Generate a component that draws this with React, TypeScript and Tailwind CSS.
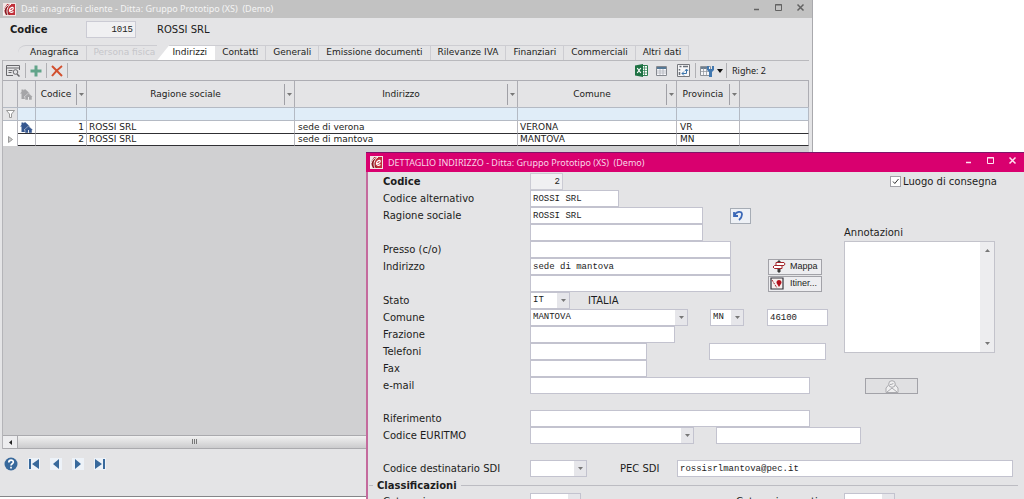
import { useState } from "react";
import type { ReactNode } from "react";
import clsx from "clsx";

const verdana = "font-['DejaVu_Sans',Verdana,sans-serif]";
const segoe = "font-['Noto_Sans','Segoe_UI',sans-serif]";
const arial = "font-['Liberation_Sans',Arial,sans-serif]";
const mono = "font-['Liberation_Mono','Courier_New',monospace]";

const tabs = [
  { name: "Anagrafica", style: "pl-3 pr-2 border-r" },
  { name: "Persona fisica", style: "pl-1.5 pr-0.5", disabled: true },
  { name: "Indirizzi", style: "pl-[15px] pr-2" },
  { name: "Contatti", style: "px-[7px] border-r" },
  { name: "Generali", style: "px-[7px] border-r" },
  { name: "Emissione documenti", style: "px-[7px] border-r" },
  { name: "Rilevanze IVA", style: "px-[7px] border-r" },
  { name: "Finanziari", style: "px-[7px] border-r" },
  { name: "Commerciali", style: "px-[7px] border-r" },
  { name: "Altri dati", style: "px-[7px] border-r" },
];

const columns = ["Codice", "Ragione sociale", "Indirizzo", "Comune", "Provincia"];

const addresses = [
  { codice: 1, ragione: "ROSSI SRL", indirizzo: "sede di verona", comune: "VERONA", provincia: "VR", main: true },
  { codice: 2, ragione: "ROSSI SRL", indirizzo: "sede di mantova", comune: "MANTOVA", provincia: "MN", main: false },
];

const Logo = () => (
  <svg viewBox="0 0 13 13" className="size-[13px] shrink-0">
    <rect width="13" height="13" fill="#f3e4e4" />
    <path d="M4 1h8v11H6C3 10 2 6 4 1z" fill="#c0303a" />
    <path d="M1 8C1 4 4 1 8 1 5 3 4 6 5 9l2 3H3z" fill="#8d1a22" />
    <path d="M1 12C0 5 4 2 8 1 4 4 3 8 5 12" fill="none" stroke="#fff" strokeWidth="0.900" />
    <path d="M6.500 7.500c2 .2 4-.9 3.700-2.400-.4-1.400-3.300-.6-3.700 2-.3 2.500 2 2.800 4 1.500" fill="none" stroke="#fff" strokeWidth="1.200" />
  </svg>
);

const WindowButtons = ({ color }: { color: string }) => (
  <div className={clsx("mt-[3px] flex items-center gap-[13px] self-start", color)}>
    <button aria-label="Riduci a icona" className="size-[9px]">
      <svg viewBox="0 0 9 9"><path d="M2 6.500h5" stroke="currentColor" strokeWidth="1.500" /></svg>
    </button>
    <button aria-label="Ingrandisci" className="size-[9px]">
      <svg viewBox="0 0 9 9"><path d="M1.500 1.500h6v6h-6zM1 2h7" fill="none" stroke="currentColor" /></svg>
    </button>
    <button aria-label="Chiudi" className="size-[9px]">
      <svg viewBox="0 0 9 9"><path d="M1.500 1.500l6 6m0-6l-6 6" stroke="currentColor" strokeWidth="1.500" /></svg>
    </button>
  </div>
);

const House = ({ color }: { color: string }) => (
  <svg viewBox="0 0 13 12" className="mx-auto h-3 w-[13px]">
    <path d="M0 5.500L1.500 4V1.500h2v1L5 1l5 4.500H8.500V11h-7V5.500z" fill={color} />
    <path d="M4 9l4.500-4L13 9h-1v3H5V9z" fill={color} stroke="#e8e8ea" strokeWidth="0.500" />
    <path d="M8.500 9v3" stroke="#e8e8ea" />
  </svg>
);

const Arrow = () => (
  <svg viewBox="0 0 5 3" className="h-[3px] w-[5px]"><path d="M0 0h5L2.500 3z" fill="#777" /></svg>
);

const Separator = () => <span className="h-[15px] w-px bg-[#b0b0b4]" />;

const Row = ({ label, htmlFor, bold, children }: { label?: string; htmlFor?: string; bold?: boolean; children?: ReactNode }) => (
  <div className="flex h-[17px] items-center">
    <label htmlFor={htmlFor} className={clsx("w-[147px] shrink-0 whitespace-nowrap", bold && "font-bold")}>
      {label}
    </label>
    {children}
  </div>
);

const Field = ({ id, label, value = "", className }: { id: string; label?: string; value?: string; className: string }) => (
  <input
    id={id}
    aria-label={label}
    defaultValue={value}
    className={clsx("h-[17px] border border-[#c3c3cf] bg-white px-0.5 text-[9px] text-[#222] outline-none", mono, className)}
  />
);

const Dropdown = ({ id, label, value = "", className }: { id: string; label?: string; value?: string; className: string }) => (
  <div className={clsx("flex h-[17px] shrink-0 border border-[#c3c3cf] bg-white", className)}>
    <select
      id={id}
      aria-label={label}
      defaultValue={value}
      className={clsx("min-w-0 flex-1 appearance-none bg-white px-0.5 text-[9px] text-[#222] outline-none", mono)}
    >
      <option>{value}</option>
    </select>
    <span className="pointer-events-none flex w-3 items-center justify-center bg-[#e6e6ea]"><Arrow /></span>
  </div>
);

const GridToolbar = () => (
  <div className="flex h-5 items-center justify-between border-t border-[#b9b9bd] pr-[43px] pl-[3px]">
    <div className="flex items-center gap-1">
      <button aria-label="Cerca" className="mr-px">
        <svg viewBox="0 0 14 13" className="h-[13px] w-3.5" fill="none" stroke="#68686c">
          <path d="M13.500 6V1.500H.5v10H7M.5 4h13M2.500 6.500h4M2.500 8.500h3" />
          <circle cx="9.500" cy="8" r="2.300" />
          <path d="M11 10l2.500 2.500" strokeWidth="1.500" />
        </svg>
      </button>
      <Separator />
      <button aria-label="Aggiungi">
        <svg viewBox="0 0 12 12" className="size-3"><path d="M6 0.500v11M0.500 6h11" stroke="#62a48a" strokeWidth="3" /></svg>
      </button>
      <Separator />
      <button aria-label="Elimina">
        <svg viewBox="0 0 12 12" className="size-3"><path d="M1 1l10 10M11 1C7 4 4 7 1 11" fill="none" stroke="#d2502f" strokeWidth="2" /></svg>
      </button>
      <Separator />
    </div>
    <div className="flex items-center">
      <button aria-label="Esporta in Excel" className="mr-2">
        <svg viewBox="0 0 13 13" className="size-[13px]">
          <path d="M7 1.500h5.500v10H7" fill="#fff" stroke="#2b7d4d" />
          <path d="M9.500 2v9M8 4h4M8 6.500h4M8 9h4" stroke="#2b7d4d" strokeWidth="0.700" />
          <path d="M0 1.500L8 0v13L0 11.500z" fill="#1f7244" />
          <path d="M2.200 4l3.600 5M5.800 4L2.200 9" stroke="#fff" strokeWidth="1.200" />
        </svg>
      </button>
      <button aria-label="Tabella" className="mr-2.5">
        <svg viewBox="0 0 11 10" className="h-2.5 w-[11px]">
          <path d="M.5.5h10v9H.5z" fill="#f8f8fb" stroke="#85888f" />
          <path d="M1 1h9v2H1z" fill="#557896" />
          <path d="M4 3v6M7 3v6M1 5h9M1 7h9" stroke="#a8abb3" strokeWidth="0.700" />
        </svg>
      </button>
      <button aria-label="Tabella pivot" className="mr-[5px]">
        <svg viewBox="0 0 13 13" className="size-[13px]" fill="none">
          <path d="M.5.5h12v12H.5z" fill="#f6f6f8" stroke="#76787d" />
          <path d="M2.500 2.500h2M6 2.500h5M2.500 5v1.500M2.500 8v3" stroke="#6a7078" strokeWidth="1.500" />
          <path d="M5 9.500h4.500v-4M7 7.500l-2 2 2 2M8 7l1.500-2L11 7" stroke="#3c76ad" />
        </svg>
      </button>
      <Separator />
      <button aria-label="Filtri colonne" className="mr-[3px] ml-1 flex items-center gap-[3px]">
        <svg viewBox="0 0 14 12" className="h-3 w-3.5">
          <path d="M.5 1.500h10v9H.5z" fill="#f6f6f8" stroke="#8d9299" />
          <path d="M1 2h8v2H1z" fill="#6c7f92" />
          <path d="M3.500 3v7M6.500 3v7M1 6.500h8" stroke="#8d9299" strokeWidth="0.700" />
          <path d="M7 1v4l2 2v5h3V7l2-2V1h-2v3H9V1z" fill="#4178b0" />
        </svg>
        <svg viewBox="0 0 6 4" className="h-1 w-1.5"><path d="M0 0h6L3 4z" fill="#111" /></svg>
      </button>
      <Separator />
      <span className={clsx("ml-[5px] text-[9px]", segoe)}>Righe: 2</span>
    </div>
  </div>
);

const AddressGrid = () => (
  <table className="w-full table-fixed border-separate border-spacing-0 text-[9px] leading-none">
    <colgroup>
      <col className="w-[15px]" />
      <col className="w-[18px]" />
      <col className="w-[51px]" />
      <col className="w-[208px]" />
      <col className="w-[223px]" />
      <col className="w-[159px]" />
      <col className="w-[63px]" />
      <col />
    </colgroup>
    <thead>
      <tr className="h-[27px] [&>th]:border-t [&>th]:border-r [&>th]:border-[#adadb3] [&>th]:p-0 [&>th]:font-normal">
        <th />
        <th><House color="#a5a5a8" /></th>
        {columns.map((column) => (
          <th key={column}>
            <div className="flex h-[26px] items-center">
              <span className="flex-1">{column}</span>
              <button aria-label={`Filtra ${column}`} className="flex h-[21px] w-2.5 items-center justify-center border-l border-[#a0a0a6]">
                <Arrow />
              </button>
            </div>
          </th>
        ))}
        <th />
      </tr>
    </thead>
    <tbody>
      <tr className="h-[13px] bg-[#e0edf8] [&>td]:border-t [&>td]:border-r [&>td]:border-[#b4bac4] [&>td]:p-0">
        <td className="bg-[#e4e4e6]">
          <svg viewBox="0 0 9 8" className="mx-auto h-2 w-[9px]"><path d="M.5.5h8L5.500 4v3.500h-2V4z" fill="#fff" stroke="#999" /></svg>
        </td>
        {Array.from({ length: 7 }, (_, i) => <td key={i} />)}
      </tr>
      {addresses.map((row) => (
        <tr
          key={row.codice}
          className={clsx(
            "h-[13px] bg-white [&>td]:border-r [&>td]:border-[#b9b9bf] [&>td]:p-0",
            row.main
              ? "[&>td]:border-t [&>td]:border-t-[#b4bac4]"
              : "[&>td:not(:first-child)]:border-y [&>td:not(:first-child)]:border-y-[#303034]",
          )}
        >
          <td>
            {!row.main && (
              <svg viewBox="0 0 5 7" className="mx-auto h-[7px] w-[5px]"><path d="M.5.5v6l4-3z" fill="#ccc" stroke="#999" /></svg>
            )}
          </td>
          <td>{row.main && <House color="#34568f" />}</td>
          <td className="text-right"><span className="pr-0.5">{row.codice}</span></td>
          <td><span className="pl-0.5">{row.ragione}</span></td>
          <td><span className="pl-[3px]">{row.indirizzo}</span></td>
          <td><span className="pl-0.5">{row.comune}</span></td>
          <td><span className="pl-[3px]">{row.provincia}</span></td>
          <td />
        </tr>
      ))}
    </tbody>
  </table>
);

const NavButtons = () => (
  <div className="flex h-[29px] items-center gap-2.5 pl-1 text-[#38699c]">
    <button aria-label="Aiuto">
      <svg viewBox="0 0 14 14" className="size-3.5">
        <circle cx="7" cy="7" r="6.500" fill="#38699c" />
        <path d="M4.800 5.500c0-3.300 4.700-3 4.500-.3C9.200 6.800 7 6.700 7 8.500M7 9.800v1.700" fill="none" stroke="#fff" strokeWidth="1.700" />
      </svg>
    </button>
    <button aria-label="Primo" className="bg-[#edf2f8]">
      <svg viewBox="0 0 12 12" className="size-3"><path d="M1 1h2v10H1zM11 1v10L4 6z" fill="currentColor" /></svg>
    </button>
    <button aria-label="Precedente" className="bg-[#edf2f8]">
      <svg viewBox="0 0 12 12" className="size-3"><path d="M9 1v10L3 6z" fill="currentColor" /></svg>
    </button>
    <button aria-label="Successivo" className="bg-[#edf2f8]">
      <svg viewBox="0 0 12 12" className="size-3"><path d="M3 1v10l6-5z" fill="currentColor" /></svg>
    </button>
    <button aria-label="Ultimo" className="bg-[#edf2f8]">
      <svg viewBox="0 0 12 12" className="size-3"><path d="M9 1h2v10H9zM1 1v10l7-5z" fill="currentColor" /></svg>
    </button>
  </div>
);

const CustomerWindow = () => {
  const [active, setActive] = useState("Indirizzi");

  return (
    <section className="absolute top-0 right-[211px] bottom-0.5 left-0 flex flex-col border-r border-b border-r-[#a9a9ad] border-b-[#858588] bg-[#e4e4e6]">
      <header className="flex h-[18px] shrink-0 items-center justify-between bg-[#c2c2c2] pr-[7px] pl-[3px]">
        <div className="flex items-center gap-[5px]">
          <Logo />
          <h1 className={clsx("text-[9px] whitespace-pre text-[#f4f4f4]", segoe)}>
            {"Dati anagrafici cliente - Ditta: Gruppo Prototipo (XS)  (Demo)"}
          </h1>
        </div>
        <WindowButtons color="text-[#626262]" />
      </header>

      <div className="flex h-[27px] shrink-0 items-center pb-1 pl-2.5">
        <label htmlFor="cliente" className="w-[76px] font-bold">Codice</label>
        <input id="cliente" readOnly value="1015" className={clsx("h-[17px] w-[50px] border border-[#cbcbd4] bg-[#f0f0f2] px-0.5 text-right text-[9px] outline-none", mono)} />
        <span className="ml-[21px]">ROSSI SRL</span>
      </div>

      {/* Tabs */}
      <div role="tablist" className="flex h-[15px] shrink-0 pl-[18px] text-[9px]">
        {tabs.map((tab) => (
          <button
            key={tab.name}
            role="tab"
            aria-selected={tab.name === active}
            disabled={tab.disabled}
            onClick={() => setActive(tab.name)}
            className={clsx(
              "border-t border-[#cdcdd2] pb-0.5 leading-3 whitespace-nowrap",
              tab.style,
              tab.disabled && "text-[#c6c6ca]",
              tab.name === "Anagrafica" && "rounded-tl-lg",
              tab.name === active && "bg-white [clip-path:polygon(12px_0,100%_0,100%_100%,0_100%)]",
            )}
          >
            {tab.name}
          </button>
        ))}
      </div>

      <div className="mr-[3px] ml-0.5 flex flex-1 flex-col border-l border-[#b4b4b8] bg-[#d0d0d2]">
        <div className="bg-[#e4e4e6]">
          <GridToolbar />
          <AddressGrid />
        </div>
        <div className="mt-auto flex h-3.5 border-y border-[#aaaaae] bg-[#ededef]">
          <button aria-label="Scorri a sinistra" className="flex w-3.5 items-center justify-center">
            <svg viewBox="0 0 3 5" className="h-[5px] w-[3px]"><path d="M3 0v5L0 2.500z" fill="#222" /></svg>
          </button>
          <div className="flex flex-1 border-l border-[#aaaaae] bg-gradient-to-b from-[#f1f1f1] to-[#cbcbcd] pl-[174px]">
            <svg viewBox="0 0 5 5" className="mt-[3px] size-[5px]"><path d="M.5 0v5M2.500 0v5M4.500 0v5" stroke="#777" /></svg>
          </div>
        </div>
      </div>
      <footer className="h-[47px] shrink-0">
        <NavButtons />
      </footer>
    </section>
  );
};

const AddressWindow = () => (
  <section className="absolute top-[152px] right-0 bottom-0 left-[366px] flex flex-col overflow-hidden bg-[#e4e4e6]">
    <header className="flex h-5 shrink-0 items-center justify-between border-t border-[#7d1569] bg-[#d9006f] pr-[7px] pl-1">
      <div className="flex items-center gap-[5px]">
        <Logo />
        <h2 className={clsx("text-[9px] whitespace-pre text-[#f8d5e7]", segoe)}>
          {"DETTAGLIO INDIRIZZO - Ditta: Gruppo Prototipo (XS)  (Demo)"}
        </h2>
      </div>
      <WindowButtons color="text-[#ffe0f0]" />
    </header>

    <form className="flex-1 border-l-2 border-[#c46a9d] pt-px pl-[15px]">
      <div className="flex">
        <div className="w-[461px] shrink-0">
          <Row label="Codice" htmlFor="codice" bold>
            <input id="codice" readOnly value="2" className={clsx("h-[17px] w-[33px] border border-[#cbcbd4] bg-[#f0f0f2] px-0.5 text-right text-[9px] outline-none", mono)} />
          </Row>
          <Row label="Codice alternativo" htmlFor="alternativo">
            <Field id="alternativo" value="ROSSI SRL" className="w-[89px]" />
          </Row>
          <Row label="Ragione sociale" htmlFor="ragione">
            <Field id="ragione" value="ROSSI SRL" className="w-[173px]" />
            <button type="button" aria-label="Annulla" className="ml-[27px] flex h-4 w-[21px] items-center border border-[#a6acb5] bg-[#eef1f6] pl-0.5">
              <svg viewBox="0 0 11 11" className="size-[11px]" fill="none" stroke="#3c69b8" strokeWidth="1.800">
                <path d="M1 2v4h4M1.500 5.500C3 1 9 .5 9 4.500c0 2-1.200 4-3 5.500" />
              </svg>
            </button>
          </Row>
          <Row><Field id="ragione2" label="Ragione sociale, seconda riga" className="w-[173px]" /></Row>
          <Row label="Presso (c/o)" htmlFor="presso"><Field id="presso" className="w-[201px]" /></Row>
          <Row label="Indirizzo" htmlFor="indirizzo">
            <Field id="indirizzo" value="sede di mantova" className="w-[201px]" />
            <button type="button" className={clsx("ml-[37px] flex h-4 w-[54px] items-center gap-1 border border-[#a2a2a8] bg-[#ededf0] pl-[3px] text-[9px]", arial)}>
              <svg viewBox="0 0 14 13" className="h-[13px] w-3.5" fill="#fff" stroke="#a3242c">
                <path d="M6 1h2v11H6z" fill="#444" stroke="#333" />
                <path d="M4 2.500h8l1 1.500-1 1.500H4zM2.500 5.500H10v3H2.500L1 7z" />
              </svg>
              Mappa
            </button>
          </Row>
          <Row>
            <Field id="indirizzo2" label="Indirizzo, seconda riga" className="w-[201px]" />
            <button type="button" className={clsx("ml-[37px] flex h-4 w-[54px] items-center gap-1 border border-[#a2a2a8] bg-[#ededf0] pl-px text-[9px]", arial)}>
              <svg viewBox="0 0 14 13" className="mr-0.5 h-[13px] w-3.5">
                <path d="M1 1h12v11H1z" fill="#f6f0ef" stroke="#34343c" strokeWidth="1.200" />
                <path d="M2 3l5 8" stroke="#a3242c" strokeDasharray="2 1" />
                <path d="M9 10L6.500 6C6 2 12 2 11.500 6z" fill="#b3101c" />
              </svg>
              Itiner...
            </button>
          </Row>
          <Row label="Stato" htmlFor="stato">
            <Dropdown id="stato" value="IT" className="w-10" />
            <span className="ml-[18px]">ITALIA</span>
          </Row>
          <Row label="Comune" htmlFor="comune">
            <Dropdown id="comune" value="MANTOVA" className="w-[158px]" />
            <Dropdown id="provincia" label="Provincia" value="MN" className="ml-[22px] w-[34px]" />
            <Field id="cap" label="CAP" value="46100" className="ml-[23px] w-[61px]" />
          </Row>
          <Row label="Frazione" htmlFor="frazione"><Field id="frazione" className="w-[145px]" /></Row>
          <Row label="Telefoni" htmlFor="telefono">
            <Field id="telefono" className="w-[117px]" />
            <Field id="telefono2" label="Secondo telefono" className="ml-[62px] w-[117px]" />
          </Row>
          <Row label="Fax" htmlFor="fax"><Field id="fax" className="w-[117px]" /></Row>
          <Row label="e-mail" htmlFor="email"><Field id="email" className="w-[280px]" /></Row>
        </div>

        {/* Notes */}
        <div className="flex w-[153px] flex-col">
          <label className="flex h-[17px] items-center gap-0.5 self-end whitespace-nowrap">
            <span className="relative flex">
              <input type="checkbox" defaultChecked className="peer size-[11px] appearance-none border border-[#a2a2a8] bg-white" />
              <svg viewBox="0 0 11 11" className="pointer-events-none absolute inset-0 hidden size-[11px] peer-checked:block">
                <path d="M3 5.500L4.800 7.500 8.500 3" fill="none" stroke="#333" />
              </svg>
            </span>
            Luogo di consegna
          </label>
          <label htmlFor="note" className="mt-[34px] h-[17px] leading-[17px]">Annotazioni</label>
          <div className="flex h-28 w-[151px] border border-[#c3c3cb] bg-white">
            <textarea id="note" className={clsx("flex-1 resize-none p-0.5 text-[9px] outline-none", mono)} />
            <div className="flex w-3.5 flex-col items-center justify-between bg-[#ededef] py-[7px]">
              <span className="rotate-180"><Arrow /></span>
              <Arrow />
            </div>
          </div>
          <button type="button" aria-label="Contatto e-mail" className="mt-auto ml-[21px] flex h-4 w-[53px] items-center justify-center border border-[#a2a2a8] bg-[#e0e0e2]">
            <svg viewBox="0 0 14 13" className="h-[13px] w-3.5" fill="#efeff0" stroke="#aaaaae">
              <path d="M1 12.500V8l3-3.500h6L13 8v4.500z" />
              <circle cx="7" cy="4" r="3.300" />
              <path d="M2 12l5-4 5 4M5 4.500c1.500 0 3-.5 3.500-1.500" fill="none" />
            </svg>
          </button>
        </div>
      </div>

      <div className="pt-4">
        <Row label="Riferimento" htmlFor="riferimento"><Field id="riferimento" className="w-[280px]" /></Row>
        <Row label="Codice EURITMO" htmlFor="euritmo">
          <Dropdown id="euritmo" className="w-[164px]" />
          <Field id="euritmo2" label="Descrizione EURITMO" className="ml-[22px] w-[145px]" />
        </Row>
      </div>
      <div className="pt-4 pr-[11px]">
        <Row label="Codice destinatario SDI" htmlFor="sdi">
          <Dropdown id="sdi" className="w-[57px]" />
          <label htmlFor="pec" className="ml-[33px] w-[57px] shrink-0">PEC SDI</label>
          <Field id="pec" value="rossisrlmantova@pec.it" className="min-w-0 flex-1" />
        </Row>
      </div>

      {/* Classifications */}
      <div className="-ml-3.5 flex h-4 items-center gap-1 pr-1.5">
        <span className="h-px w-1 bg-[#bcbcc2]" />
        <h3 className="font-bold">Classificazioni</h3>
        <span className="h-px flex-1 bg-[#bcbcc2]" />
      </div>
      <Row label="Categoria" htmlFor="categoria">
        <Dropdown id="categoria" className="w-[51px]" />
        <label htmlFor="sconti" className="ml-[155px] w-[108px]">Categoria sconti</label>
        <Dropdown id="sconti" className="w-[51px]" />
      </Row>
    </form>
  </section>
);

const App = () => (
  <main className={clsx("relative h-screen overflow-hidden bg-white text-[10px] text-[#1c1c20]", verdana)}>
    <CustomerWindow />
    <AddressWindow />
  </main>
);

export default App;
